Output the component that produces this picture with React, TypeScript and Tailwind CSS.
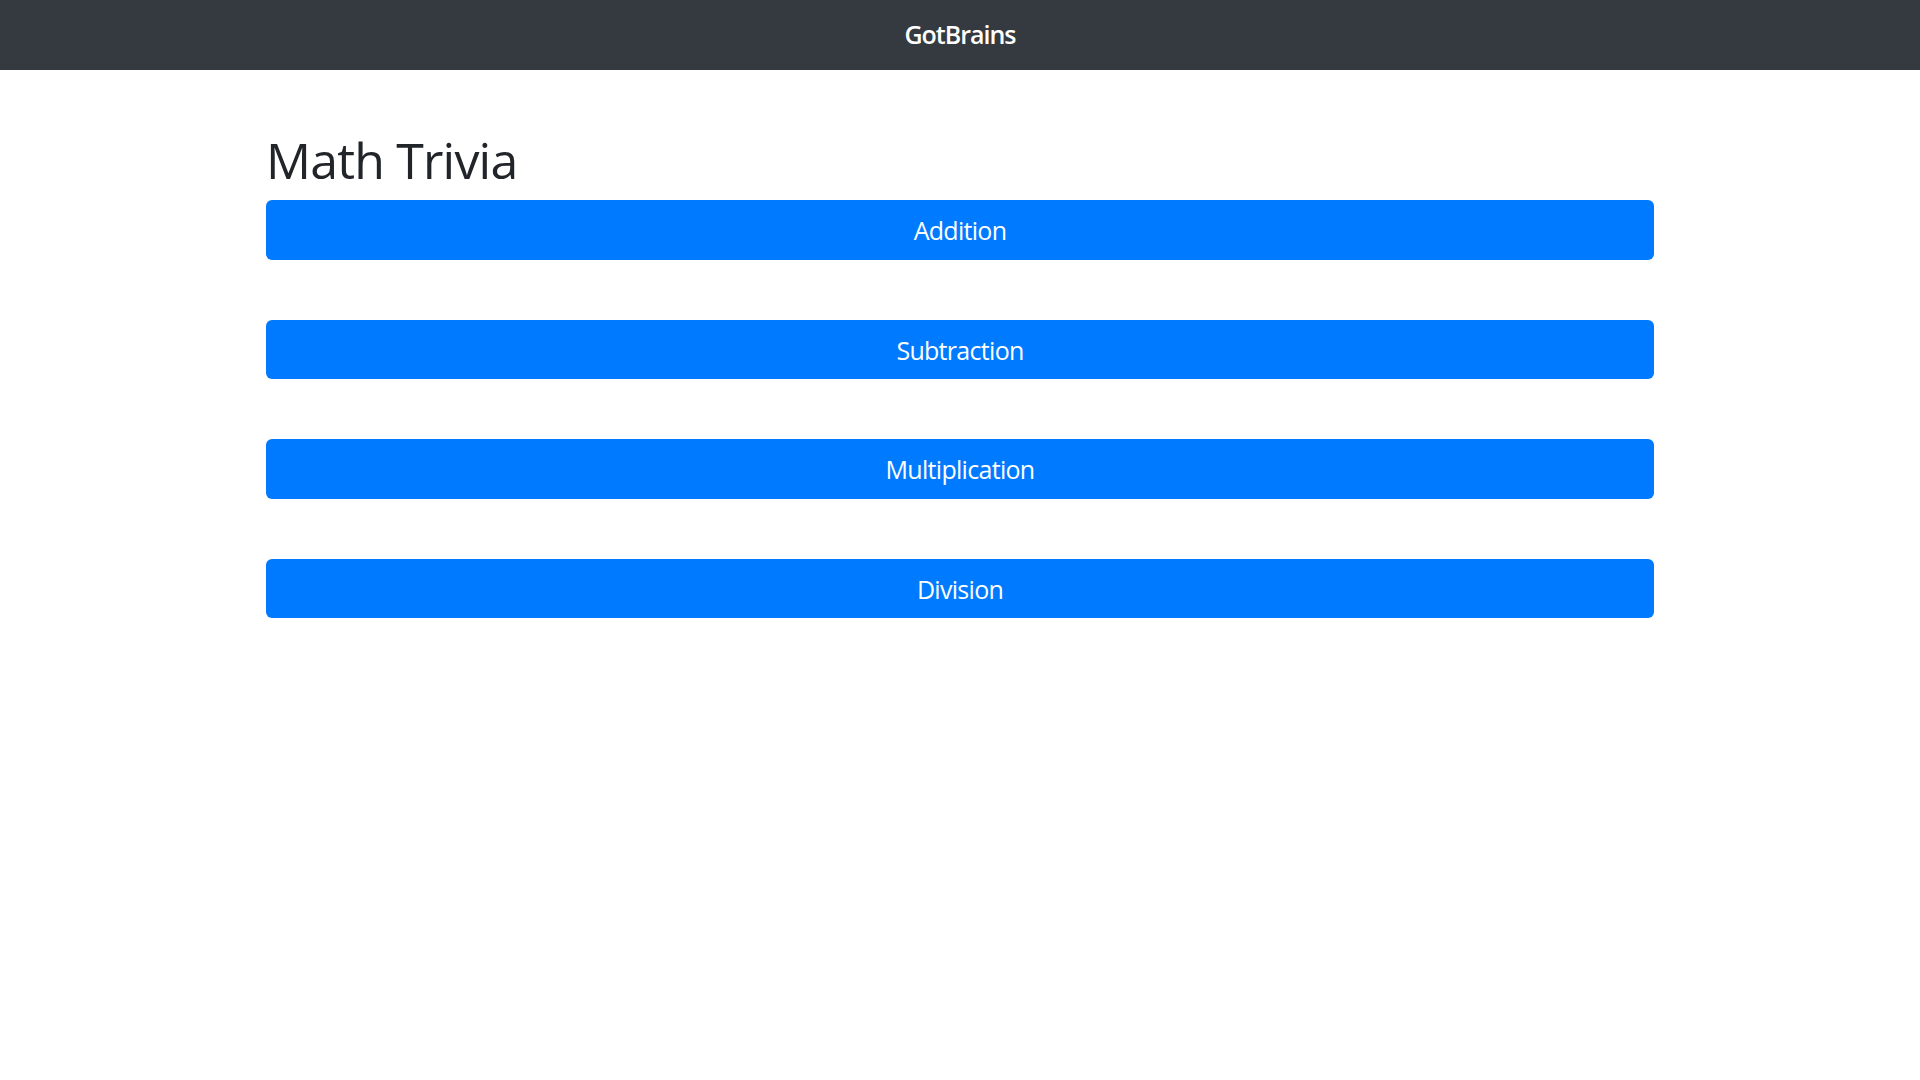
const topics = ['Addition', 'Subtraction', 'Multiplication', 'Division'];

export default function App() {
  return (
    <div className="min-h-screen bg-white text-[#212529]" style={{ fontFamily: '"Open Sans", "Noto Sans", sans-serif' }}>
      <nav className="h-[70px] bg-[#343a40] flex items-center justify-center">
        <span className="text-[25px] font-semibold text-white tracking-[-1px]">GotBrains</span>
      </nav>

      <div className="w-[1388px] mx-auto mt-[60px]">
        <h1 className="text-[50px] leading-[60px] font-medium mb-[10px] tracking-[-0.8px]">Math Trivia</h1>
        <div className="flex flex-col gap-[60px]">
          {topics.map(t => (
            <button
              key={t}
              className="w-full h-[59.5px] rounded-[6px] bg-[#007bff] text-white text-[25px] leading-[37px] tracking-[-0.7px] pt-[2px] flex items-center justify-center"
            >
              {t}
            </button>
          ))}
        </div>
      </div>
    </div>
  );
}
